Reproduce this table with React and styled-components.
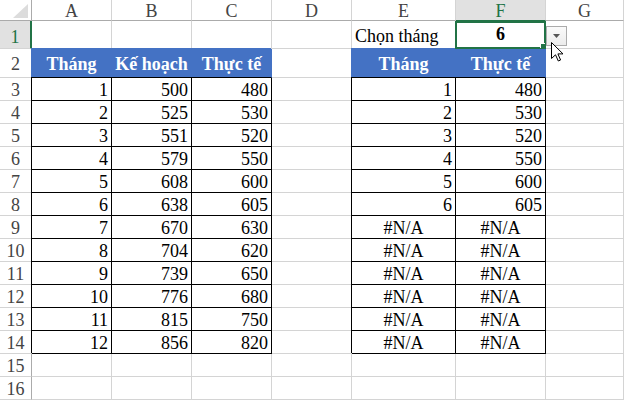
import React from 'react';
import styled, { createGlobalStyle, css } from 'styled-components';

const GRID = '#d4d4d4';
const HEAD_EDGE = '#ababab';
const BLUE = '#4472c4';
const GREEN = '#217346';
const ACTIVE_BG = '#e1e1e1';

const Global = createGlobalStyle`
  html, body { margin: 0; padding: 0; background: #fff; }
  body { font-family: "Liberation Serif", "Times New Roman", serif; }
`;

const Sheet = styled.div`
  position: relative;
  display: grid;
  grid-template-columns: 32px 80px 80px 80px 80px 104px 90px 1fr;
  grid-template-rows: 21px 28px 29px;
  grid-auto-rows: 23px;
  align-content: start;
  width: 624px;
  height: 401px;
  overflow: hidden;
  font-family: "Liberation Serif", "Times New Roman", serif;
  font-size: 18px;
  color: #000;
`;

const Corner = styled.div`
  box-sizing: border-box;
  border-right: 1px solid ${HEAD_EDGE};
  border-bottom: 1px solid ${HEAD_EDGE};
  background: #fff;
  display: flex;
  align-items: flex-end;
  justify-content: flex-end;
  padding: 0 3px 2px 0;
`;

const ColHead = styled.div`
  box-sizing: border-box;
  display: flex;
  align-items: center;
  justify-content: center;
  line-height: 1;
  padding-top: 1px;
  color: ${p => (p.$active ? GREEN : '#444')};
  background: ${p => (p.$active ? ACTIVE_BG : '#fff')};
  border-right: 1px solid ${GRID};
  border-bottom: 1px solid ${p => (p.$active ? GREEN : HEAD_EDGE)};
`;

const RowHead = styled.div`
  box-sizing: border-box;
  display: flex;
  align-items: flex-end;
  justify-content: center;
  line-height: 1;
  padding-bottom: ${p => p.$pad}px;
  color: ${p => (p.$active ? GREEN : '#444')};
  background: ${p => (p.$active ? ACTIVE_BG : '#fff')};
  border-right: ${p => (p.$active ? `2px solid ${GREEN}` : `1px solid ${HEAD_EDGE}`)};
  border-bottom: 1px solid ${GRID};
`;

const kinds = {
  plain: css`
    border-right: 1px solid ${GRID};
    border-bottom: 1px solid ${GRID};
  `,
  head: css`
    background: ${BLUE};
    color: #fff;
    font-weight: bold;
    border-right: 1px solid ${BLUE};
    border-bottom: 1px solid #000;
    box-shadow: -1px -1px 0 0 ${BLUE};
  `,
  box: css`
    background: #fff;
    border-right: 1px solid #000;
    border-bottom: 1px solid #000;
    box-shadow: -1px -1px 0 0 #000;
  `,
};

const justify = { left: 'flex-start', right: 'flex-end', center: 'center' };

const Cell = styled.div`
  box-sizing: border-box;
  display: flex;
  align-items: flex-end;
  justify-content: ${p => justify[p.$align || 'left']};
  padding: 0 3px ${p => p.$pad}px 3px;
  line-height: 1;
  white-space: nowrap;
  font-weight: ${p => (p.$bold ? 'bold' : 'normal')};
  ${p => kinds[p.$kind || 'plain']}
  ${p => p.$selected && css`position: relative;`}
`;

const Selection = styled.div`
  position: absolute;
  top: 0;
  left: -1px;
  right: -1px;
  bottom: -1px;
  border: 2px solid ${GREEN};
  pointer-events: none;
  z-index: 2;
`;

const FillHandle = styled.div`
  position: absolute;
  right: -2px;
  bottom: -2px;
  width: 5px;
  height: 5px;
  background: ${GREEN};
  box-shadow: -1px -1px 0 0 #fff;
`;

const DropButton = styled.div`
  position: absolute;
  left: 89px;
  top: 3px;
  width: 21px;
  height: 20px;
  box-sizing: border-box;
  border: 1px solid #ababab;
  background: linear-gradient(#fafafa, #ececec);
  display: flex;
  align-items: center;
  justify-content: center;
`;

const Pointer = styled.svg`
  position: absolute;
  left: 94px;
  top: 19px;
  overflow: visible;
`;

const plan = [500, 525, 551, 579, 608, 638, 670, 704, 739, 776, 815, 856];
const actual = [480, 530, 520, 550, 600, 605, 630, 620, 650, 680, 750, 820];
const COLS = ['A', 'B', 'C', 'D', 'E', 'F', 'G'];
const ROW_COUNT = 16;

function cellFor(r, c) {
  if (r === 1) {
    if (c === 'E') return { text: 'Chọn tháng', align: 'left' };
    if (c === 'F') return { text: '6', align: 'center', bold: true, selected: true };
    return {};
  }
  if (r === 2) {
    const head = { A: 'Tháng', B: 'Kế hoạch', C: 'Thực tế', E: 'Tháng', F: 'Thực tế' };
    if (head[c]) return { text: head[c], kind: 'head', align: 'center' };
    return {};
  }
  if (r >= 3 && r <= 14) {
    const i = r - 3;
    if (c === 'A') return { text: i + 1, kind: 'box', align: 'right' };
    if (c === 'B') return { text: plan[i], kind: 'box', align: 'right' };
    if (c === 'C') return { text: actual[i], kind: 'box', align: 'right' };
    const filled = i < 6;
    if (c === 'E') return filled ? { text: i + 1, kind: 'box', align: 'right' } : { text: '#N/A', kind: 'box', align: 'center' };
    if (c === 'F') return filled ? { text: actual[i], kind: 'box', align: 'right' } : { text: '#N/A', kind: 'box', align: 'center' };
  }
  return {};
}

const padFor = r => (r === 1 ? 3 : r === 2 ? 4 : 1);

export default function App() {
  const cells = [];
  cells.push(
    <Corner key="corner">
      <svg width="15" height="14" viewBox="0 0 15 14">
        <polygon points="0,14 15,14 15,0" fill="#dcdcdc" />
      </svg>
    </Corner>
  );
  COLS.forEach(c =>
    cells.push(
      <ColHead key={`h${c}`} $active={c === 'F'}>
        {c}
      </ColHead>
    )
  );
  for (let r = 1; r <= ROW_COUNT; r++) {
    cells.push(
      <RowHead key={`r${r}`} $active={r === 1} $pad={r === 1 ? 2 : padFor(r)}>
        {r}
      </RowHead>
    );
    COLS.forEach(c => {
      const d = cellFor(r, c);
      cells.push(
        <Cell
          key={`${c}${r}`}
          $kind={d.kind}
          $align={d.align}
          $bold={d.bold}
          $selected={d.selected}
          $pad={d.selected ? 5 : padFor(r)}
        >
          {d.text}
          {d.selected && (
            <Selection>
              <FillHandle />
              <DropButton>
                <svg width="7" height="4" viewBox="0 0 7 4">
                  <polygon points="0,0 7,0 3.5,4" fill="#555" />
                </svg>
              </DropButton>
              <Pointer width="13" height="20" viewBox="0 0 13 20">
                <path
                  d="M0.5 0.5 L0.5 16.5 L4.5 12.8 L7.3 19 L9.6 18 L6.9 11.9 L12 11.9 Z"
                  fill="#fff"
                  stroke="#000"
                  strokeWidth="1"
                  strokeLinejoin="miter"
                />
              </Pointer>
            </Selection>
          )}
        </Cell>
      );
    });
  }
  return (
    <>
      <Global />
      <Sheet>{cells}</Sheet>
    </>
  );
}
